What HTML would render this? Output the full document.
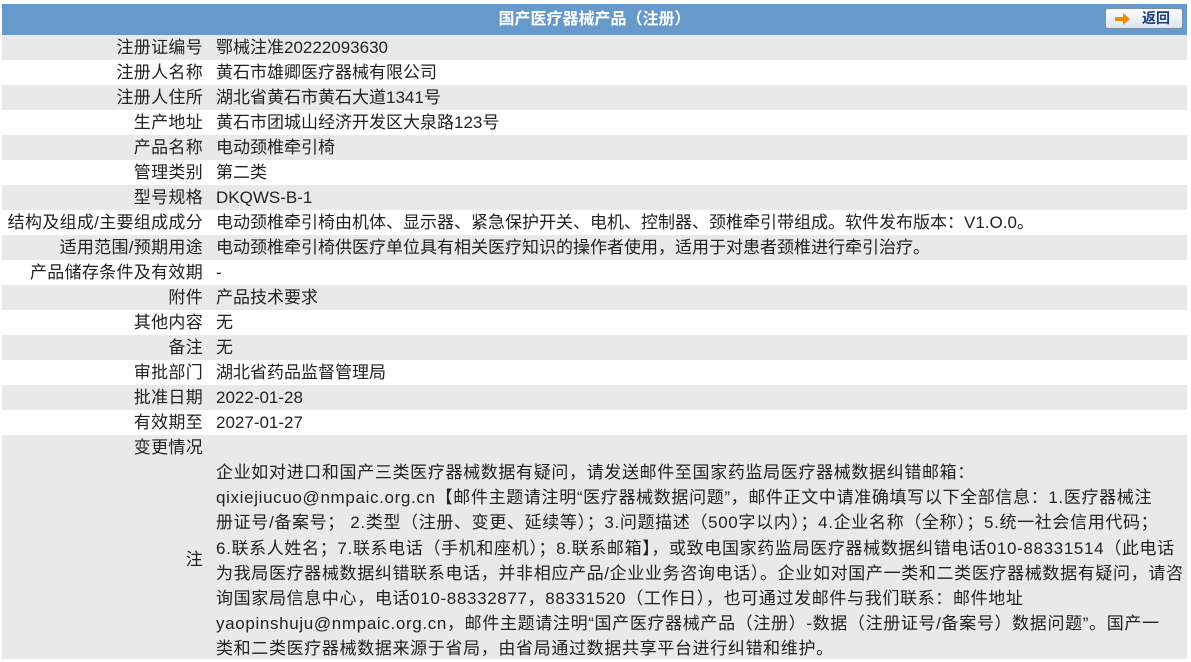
<!DOCTYPE html>
<html><head><meta charset="utf-8"><style>
body{margin:0;width:1191px;height:661px;overflow:hidden;background:#fff;font-family:"Liberation Sans","Noto Sans CJK SC",sans-serif;font-size:17px;color:#222}
.hd{position:absolute;left:2px;top:4px;width:1185px;height:31px;background:#6699cc;color:#fff;font-weight:bold;text-align:center;line-height:31px;font-size:16px}
.btn{position:absolute;left:1105px;top:8px;width:78px;height:21px;background:linear-gradient(#fff,#dde4ee);border:1px solid #7a8fb0;border-radius:3px;box-sizing:border-box;font-size:14px;font-weight:bold;color:#1d3d7a;line-height:19px}
.row{position:absolute;left:2px;width:1185px;height:25px;line-height:25px}
.g{background:#e9e9e9}
.l{position:absolute;right:984px;white-space:nowrap;letter-spacing:0.3px}
.v{position:absolute;left:214px;white-space:nowrap}
.note{position:absolute;left:216px;top:460px;line-height:25.2px;white-space:nowrap;letter-spacing:0.65px}
</style></head><body>
<div class="hd">国产医疗器械产品（注册）</div>
<div class="btn"><svg style="position:absolute;left:9px;top:4px" width="16" height="12"><path d="M0 4h8V0l7 6-7 6V8H0z" fill="#f08c00"/></svg><span style="position:absolute;left:36px">返回</span></div>
<div class="row g" style="top:35px"><span class="l">注册证编号</span><span class="v">鄂械注准20222093630</span></div>
<div class="row" style="top:60px"><span class="l">注册人名称</span><span class="v">黄石市雄卿医疗器械有限公司</span></div>
<div class="row g" style="top:85px"><span class="l">注册人住所</span><span class="v">湖北省黄石市黄石大道1341号</span></div>
<div class="row" style="top:110px"><span class="l">生产地址</span><span class="v">黄石市团城山经济开发区大泉路123号</span></div>
<div class="row g" style="top:135px"><span class="l">产品名称</span><span class="v">电动颈椎牵引椅</span></div>
<div class="row" style="top:160px"><span class="l">管理类别</span><span class="v">第二类</span></div>
<div class="row g" style="top:185px"><span class="l">型号规格</span><span class="v">DKQWS-B-1</span></div>
<div class="row" style="top:210px"><span class="l">结构及组成/主要组成成分</span><span class="v">电动颈椎牵引椅由机体、显示器、紧急保护开关、电机、控制器、颈椎牵引带组成。软件发布版本：V1.O.0。</span></div>
<div class="row g" style="top:235px"><span class="l">适用范围/预期用途</span><span class="v">电动颈椎牵引椅供医疗单位具有相关医疗知识的操作者使用，适用于对患者颈椎进行牵引治疗。</span></div>
<div class="row" style="top:260px"><span class="l">产品储存条件及有效期</span><span class="v">-</span></div>
<div class="row g" style="top:285px"><span class="l">附件</span><span class="v">产品技术要求</span></div>
<div class="row" style="top:310px"><span class="l">其他内容</span><span class="v">无</span></div>
<div class="row g" style="top:335px"><span class="l">备注</span><span class="v">无</span></div>
<div class="row" style="top:360px"><span class="l">审批部门</span><span class="v">湖北省药品监督管理局</span></div>
<div class="row g" style="top:385px"><span class="l">批准日期</span><span class="v">2022-01-28</span></div>
<div class="row" style="top:410px"><span class="l">有效期至</span><span class="v">2027-01-27</span></div>
<div class="row g" style="top:435px;height:224px"><span class="l">变更情况</span><span class="l" style="top:112px">注</span></div>
<div class="note">企业如对进口和国产三类医疗器械数据有疑问，请发送邮件至国家药监局医疗器械数据纠错邮箱：<br>qixiejiucuo@nmpaic.org.cn【邮件主题请注明“医疗器械数据问题”，邮件正文中请准确填写以下全部信息：1.医疗器械注<br>册证号/备案号； 2.类型（注册、变更、延续等）；3.问题描述（500字以内）；4.企业名称（全称）；5.统一社会信用代码；<br>6.联系人姓名；7.联系电话（手机和座机）；8.联系邮箱】，或致电国家药监局医疗器械数据纠错电话010-88331514（此电话<br>为我局医疗器械数据纠错联系电话，并非相应产品/企业业务咨询电话）。企业如对国产一类和二类医疗器械数据有疑问，请咨<br>询国家局信息中心，电话010-88332877，88331520（工作日），也可通过发邮件与我们联系：邮件地址<br>yaopinshuju@nmpaic.org.cn，邮件主题请注明“国产医疗器械产品（注册）-数据（注册证号/备案号）数据问题”。国产一<br>类和二类医疗器械数据来源于省局，由省局通过数据共享平台进行纠错和维护。</div>
</body></html>
